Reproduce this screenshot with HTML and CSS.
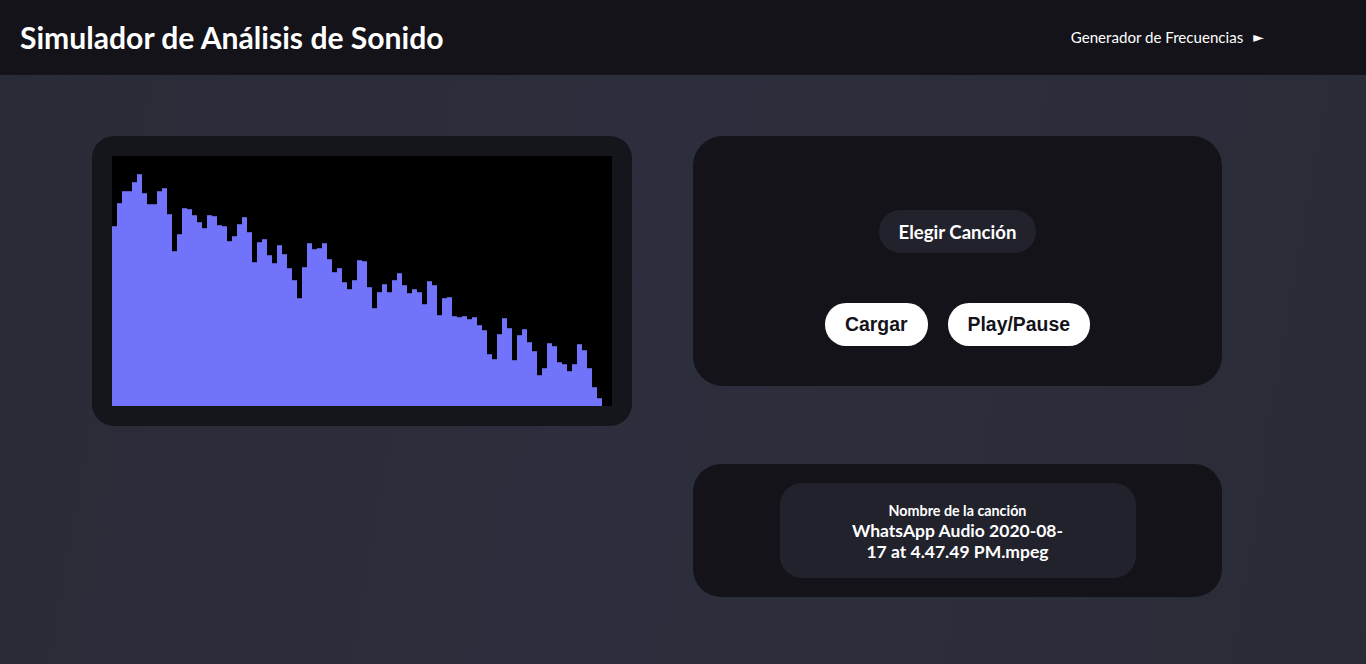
FILE: index.html
```html
<!DOCTYPE html>
<html lang="es">
<head>
<meta charset="utf-8">
<title>Simulador de Análisis de Sonido</title>
<link rel="stylesheet" href="styles.css">
</head>
<body>
<header class="topbar">
  <h1 class="title">Simulador de Análisis de Sonido</h1>
  <a class="nav-link" href="#">Generador de Frecuencias <span class="arrow">&#9658;</span></a>
</header>
<main class="main">
  <section class="chart-card">
    <div class="canvas">
      <div class="bar" style="height:180px"></div><div class="bar" style="height:203px"></div><div class="bar" style="height:215px"></div><div class="bar" style="height:215px"></div><div class="bar" style="height:224px"></div><div class="bar" style="height:232px"></div><div class="bar" style="height:213px"></div><div class="bar" style="height:202px"></div><div class="bar" style="height:202px"></div><div class="bar" style="height:215px"></div>
      <div class="bar" style="height:218px"></div><div class="bar" style="height:192px"></div><div class="bar" style="height:155px"></div><div class="bar" style="height:172px"></div><div class="bar" style="height:198px"></div><div class="bar" style="height:197px"></div><div class="bar" style="height:191px"></div><div class="bar" style="height:184px"></div><div class="bar" style="height:178px"></div><div class="bar" style="height:191px"></div>
      <div class="bar" style="height:190px"></div><div class="bar" style="height:181px"></div><div class="bar" style="height:180px"></div><div class="bar" style="height:165px"></div><div class="bar" style="height:170px"></div><div class="bar" style="height:182px"></div><div class="bar" style="height:189px"></div><div class="bar" style="height:174px"></div><div class="bar" style="height:144px"></div><div class="bar" style="height:164px"></div>
      <div class="bar" style="height:167px"></div><div class="bar" style="height:151px"></div><div class="bar" style="height:143px"></div><div class="bar" style="height:161px"></div><div class="bar" style="height:152px"></div><div class="bar" style="height:138px"></div><div class="bar" style="height:126px"></div><div class="bar" style="height:108px"></div><div class="bar" style="height:139px"></div><div class="bar" style="height:163px"></div>
      <div class="bar" style="height:157px"></div><div class="bar" style="height:158px"></div><div class="bar" style="height:163px"></div><div class="bar" style="height:147px"></div><div class="bar" style="height:134px"></div><div class="bar" style="height:138px"></div><div class="bar" style="height:124px"></div><div class="bar" style="height:117px"></div><div class="bar" style="height:126px"></div><div class="bar" style="height:146px"></div>
      <div class="bar" style="height:145px"></div><div class="bar" style="height:119px"></div><div class="bar" style="height:98px"></div><div class="bar" style="height:114px"></div><div class="bar" style="height:122px"></div><div class="bar" style="height:114px"></div><div class="bar" style="height:126px"></div><div class="bar" style="height:133px"></div><div class="bar" style="height:121px"></div><div class="bar" style="height:113px"></div>
      <div class="bar" style="height:117px"></div><div class="bar" style="height:114px"></div><div class="bar" style="height:102px"></div><div class="bar" style="height:125px"></div><div class="bar" style="height:121px"></div><div class="bar" style="height:91px"></div><div class="bar" style="height:108px"></div><div class="bar" style="height:109px"></div><div class="bar" style="height:90px"></div><div class="bar" style="height:89px"></div>
      <div class="bar" style="height:90px"></div><div class="bar" style="height:87px"></div><div class="bar" style="height:89px"></div><div class="bar" style="height:81px"></div><div class="bar" style="height:76px"></div><div class="bar" style="height:52px"></div><div class="bar" style="height:47px"></div><div class="bar" style="height:72px"></div><div class="bar" style="height:88px"></div><div class="bar" style="height:78px"></div>
      <div class="bar" style="height:46px"></div><div class="bar" style="height:71px"></div><div class="bar" style="height:77px"></div><div class="bar" style="height:64px"></div><div class="bar" style="height:55px"></div><div class="bar" style="height:31px"></div><div class="bar" style="height:38px"></div><div class="bar" style="height:63px"></div><div class="bar" style="height:60px"></div><div class="bar" style="height:44px"></div>
      <div class="bar" style="height:42px"></div><div class="bar" style="height:35px"></div><div class="bar" style="height:42px"></div><div class="bar" style="height:62px"></div><div class="bar" style="height:56px"></div><div class="bar" style="height:38px"></div><div class="bar" style="height:19px"></div><div class="bar" style="height:8px"></div>
    </div>
  </section>
  <div class="side">
    <section class="control-card">
      <button class="choose-btn" type="button">Elegir Canción</button>
      <div class="actions">
        <button class="pill-btn" type="button">Cargar</button>
        <button class="pill-btn" type="button">Play/Pause</button>
      </div>
    </section>
    <section class="info-card">
      <div class="info-box">
        <div class="info-label">Nombre de la canción</div>
        <div class="info-name">WhatsApp Audio 2020-08-17 at 4.47.49 PM.mpeg</div>
      </div>
    </section>
  </div>
</main>
</body>
</html>
```

FILE: styles.css
```css
* { box-sizing: border-box; }

html, body {
  margin: 0;
  padding: 0;
  height: 100%;
}

body {
  font-family: Lato, "Noto Sans", sans-serif;
  color: #ffffff;
  background: linear-gradient(100deg, #292b36 0%, #2d2e3d 45%, #2b2d3a 75%, #292b36 100%);
  min-height: 664px;
}

.topbar {
  height: 75px;
  background: #141319;
  display: flex;
  align-items: center;
  justify-content: space-between;
  padding: 0 102px 0 20px;
}

.title {
  margin: 0;
  font-size: 30.1px;
  font-weight: 700;
  letter-spacing: 0;
  padding-bottom: 2px;
}

.nav-link {
  color: #ffffff;
  text-decoration: none;
  font-size: 15.1px;
  font-weight: 400;
  display: flex;
  align-items: center;
  gap: 10px;
  padding-bottom: 2px;
}

.arrow {
  font-size: 14px;
  font-family: "DejaVu Sans", sans-serif;
}

.main {
  display: grid;
  grid-template-columns: 540px 529px;
  column-gap: 61px;
  align-items: start;
  padding: 61px 0 0 92px;
}

.chart-card {
  background: #15151c;
  border-radius: 22px;
  padding: 20px;
}

.canvas {
  width: 500px;
  height: 250px;
  background: #000000;
  display: flex;
  align-items: flex-end;
}

.bar {
  width: 5px;
  flex: none;
  background: #7173fb;
  border-top: 1px solid #5a5cc6;
}

.side {
  display: flex;
  flex-direction: column;
  gap: 78px;
}

.control-card {
  background: #14131a;
  border-radius: 30px;
  height: 250px;
  display: flex;
  flex-direction: column;
  align-items: center;
  padding-top: 74px;
  gap: 50px;
}

.choose-btn {
  height: 43px;
  padding: 0 20px;
  border: none;
  border-radius: 22px;
  background: #22222d;
  color: #ffffff;
  font-family: Lato, sans-serif;
  font-weight: 700;
  font-size: 18.6px;
}

.actions {
  display: flex;
  gap: 20px;
}

.pill-btn {
  height: 43px;
  padding: 0 20px;
  border: none;
  border-radius: 21px;
  background: #ffffff;
  color: #14131a;
  font-family: "Liberation Sans", Arial, sans-serif;
  font-weight: 700;
  font-size: 19.4px;
}

.info-card {
  background: #14131a;
  border-radius: 28px;
  padding: 19px 0;
  display: flex;
  justify-content: center;
}

.info-box {
  width: 356px;
  height: 95px;
  background: #22222d;
  border-radius: 22px;
  display: flex;
  flex-direction: column;
  align-items: center;
  justify-content: center;
  text-align: center;
  padding-top: 2px;
}

.info-label {
  font-size: 14.3px;
  font-weight: 700;
  line-height: 18px;
}

.info-name {
  font-size: 17.5px;
  font-weight: 700;
  line-height: 21px;
  max-width: 222px;
}
```
